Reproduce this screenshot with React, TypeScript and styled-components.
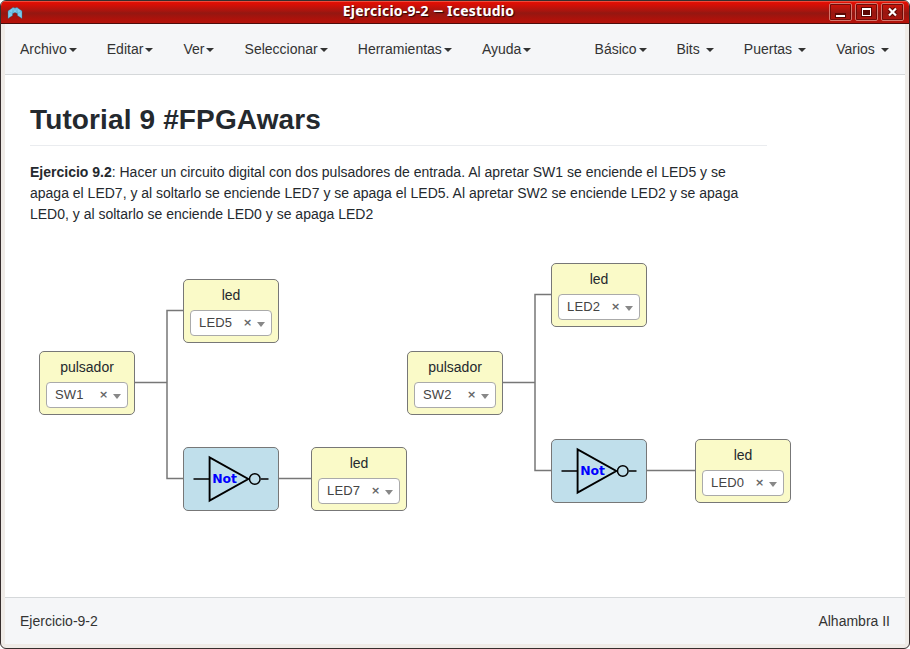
import React from "react";
import styled, { createGlobalStyle } from "styled-components";

const GlobalStyle = createGlobalStyle`
  * { box-sizing: border-box; }
  html, body { margin: 0; padding: 0; overflow: hidden; background: #fff; }
  body { font: 14px/20px "Liberation Sans", Arial, sans-serif; color: #24292e; }
`;

const Window = styled.div`
  width: 910px;
  height: 649px;
  display: flex;
  flex-direction: column;
  overflow: hidden;
  border: 1px solid #362d2d;
  border-radius: 6px;
  background: #efebe7;
`;

const TitleBar = styled.header`
  height: 23px;
  flex: none;
  display: grid;
  grid-template-columns: 32px 1fr 85px;
  align-items: center;
  border-bottom: 1px solid #4b0d0c;
  box-shadow: inset 0 1px 0 #ee4a3a;
  background: linear-gradient(#e51205 0%, #dd0e04 12%, #a6150f 46%, #941711 55%, #ae120b 82%, #b5120a 100%);
`;

const AppIcon = styled.svg`
  width: 16px;
  height: 14px;
  margin: 2px 0 0 6px;
`;

const Title = styled.h1`
  margin: -2px 0 0;
  font: bold 14px/20px "Noto Sans", sans-serif;
  letter-spacing: 0.25px;
  text-align: center;
  white-space: nowrap;
  color: #fff;
  text-shadow: 1px 1px 1px #2b0505;
`;

const Dash = styled.span`
  display: inline-block;
  transform: scaleX(1.25);
  margin: 0 1px;
`;

const WindowButtons = styled.div`
  display: flex;
  justify-content: flex-end;
  gap: 3px;
  padding: 0 5px 0 0;
`;

const WindowButton = styled.button`
  width: 23px;
  height: 18px;
  padding: 0;
  border: 1px solid #d4786f;
  border-radius: 2px;
  outline: 1px solid #6e0d09;
  outline-offset: -2px;
  background: linear-gradient(#d21309, #961711 55%, #ae140d);
  display: grid;
  place-items: center;
`;

const Bar = styled.nav`
  height: 51px;
  flex: none;
  margin: 0 4px;
  padding: 0 15px;
  display: flex;
  align-items: center;
  justify-content: space-between;
  background: #f5f6f8;
  border-bottom: 1px solid #d5d8da;
  color: #333;
`;

const MenuGroup = styled.div<{ $end?: boolean }>`
  display: flex;
  gap: ${(p) => (p.$end ? 29.8 : 30.1)}px;
  padding-right: ${(p) => (p.$end ? 0.9 : 0)}px;
`;

const MenuItem = styled.a<{ $spaced?: boolean }>`
  display: flex;
  align-items: center;
  gap: ${(p) => (p.$spaced ? 6.3 : 2)}px;
  line-height: 20px;
  &::after {
    content: "";
    border: 4px solid transparent;
    border-top-color: #333;
    border-bottom: 0;
    margin-top: 2px;
  }
`;

const Workspace = styled.main`
  flex: 1;
  min-height: 0;
  margin: 0 4px;
  padding: 26px 25px 0;
  position: relative;
  background: #fff;
`;

const Note = styled.section`
  width: 737px;
`;

const Heading = styled.h2`
  margin: 0 0 16px;
  height: 45px;
  font-size: 28px;
  letter-spacing: 0.13px;
  line-height: 37px;
  border-bottom: 1px solid #eaecef;
`;

const Paragraph = styled.p`
  margin: 0;
  line-height: 21px;
`;

const Wires = styled.svg`
  position: absolute;
  inset: 0;
  width: 900px;
  height: 522px;
`;

const Node = styled.div<{ $x: number; $y: number; $gate?: boolean }>`
  position: absolute;
  left: ${(p) => p.$x}px;
  top: ${(p) => p.$y}px;
  width: 96px;
  height: 64px;
  padding: 5px 6px;
  border: 1px solid #777;
  border-radius: 5px;
  background: ${(p) => (p.$gate ? "#c0dfeb" : "#fafac8")};
  text-align: center;
`;

const NodeLabel = styled.div`
  height: 25px;
  line-height: 21px;
`;

const Select = styled.div`
  height: 26px;
  display: flex;
  align-items: center;
  border: 1px solid #aaa;
  border-radius: 4px;
  background: #fff;
  padding: 0 6px 0 8px;
  font-size: 13px;
  color: #444;
`;

const Value = styled.span`
  flex: 1;
  text-align: left;
  letter-spacing: 0.15px;
`;

const Clear = styled.span`
  width: 9px;
  margin-right: 5px;
  font: bold 11px/20px "DejaVu Sans", sans-serif;
  color: #666;
`;

const Arrow = styled.i`
  border: 4px solid transparent;
  border-top: 5px solid #888;
  border-bottom: 0;
  margin-top: 2px;
`;

const GateDrawing = styled.svg`
  display: block;
  width: 94px;
  height: 62px;
  margin: -5px -6px;
`;

const Footer = styled.footer`
  height: 47px;
  flex: none;
  margin: 0 4px 4px;
  padding: 0 15px;
  display: flex;
  align-items: center;
  justify-content: space-between;
  border-top: 1px solid #d5d8da;
  background: #f5f6f8;
  color: #333;
`;

const leftMenus = ["Archivo", "Editar", "Ver", "Seleccionar", "Herramientas", "Ayuda"];
const rightMenus = [
  { label: "Básico", spaced: false },
  { label: "Bits", spaced: true },
  { label: "Puertas", spaced: true },
  { label: "Varios", spaced: true },
];

const ports = [
  { label: "pulsador", pin: "SW1", x: 34, y: 276 },
  { label: "led", pin: "LED5", x: 178, y: 204 },
  { label: "led", pin: "LED7", x: 306, y: 372 },
  { label: "pulsador", pin: "SW2", x: 402, y: 276 },
  { label: "led", pin: "LED2", x: 546, y: 188 },
  { label: "led", pin: "LED0", x: 690, y: 364 },
];

const gates = [
  { x: 178, y: 372 },
  { x: 546, y: 364 },
];

function Port({ label, pin, x, y }: (typeof ports)[number]) {
  return (
    <Node $x={x} $y={y}>
      <NodeLabel>{label}</NodeLabel>
      <Select>
        <Value>{pin}</Value>
        <Clear>×</Clear>
        <Arrow />
      </Select>
    </Node>
  );
}

function NotGate({ x, y }: { x: number; y: number }) {
  return (
    <Node $x={x} $y={y} $gate>
      <GateDrawing viewBox="0 0 94 62" fill="none" stroke="#000">
        <path d="M9.5 31H26M77 31H84.500" strokeWidth="1.300" />
        <path d="M25.600 9.300V52.700L64.300 31Z" strokeWidth="1.900" />
        <circle cx="70.800" cy="31" r="5.300" strokeWidth="1.500" />
        <text x="28.200" y="35" fill="#00f" stroke="none" fontFamily="DejaVu Sans" fontWeight="bold" fontSize="12.400">
          Not
        </text>
      </GateDrawing>
    </Node>
  );
}

export default function App() {
  return (
    <>
      <GlobalStyle />
      <Window>
        <TitleBar>
          <AppIcon viewBox="0 0 16 14">
            <path d="M1 5 6 1.500 8 2 10 1.500 15 5V12.500L10.500 9.500V7.500L8 6.500 5.500 7.500V9.500L1 12.500Z" fill="#7accee" stroke="#2b6e91" strokeWidth=".4" />
            <path d="M1 5 5.500 7.500 6 1.500M5.500 7.500 8 2 10.500 7.500 10 1.500M10.500 7.500 15 5" fill="none" stroke="#4a9cc0" strokeWidth=".4" />
          </AppIcon>
          <Title>Ejercicio-9-2 <Dash>−</Dash> Icestudio</Title>
          <WindowButtons>
            <WindowButton aria-label="Minimizar">
              <svg width="15" height="14"><path d="M2 8h11v5H2z" fill="#5b0804" /><path d="M3 10h9v2H3z" fill="#fff" /></svg>
            </WindowButton>
            <WindowButton aria-label="Maximizar">
              <svg width="15" height="14"><path d="M2 2h11v10H2z" fill="#5b0804" /><path fillRule="evenodd" d="M3 3h9v8H3zM4 5v5h7V5z" fill="#fff" /></svg>
            </WindowButton>
            <WindowButton aria-label="Cerrar">
              <svg width="15" height="14"><path d="m4 3.500 7 7m0-7-7 7" stroke="#5b0804" strokeWidth="4.500" /><path d="m4 3.500 7 7m0-7-7 7" stroke="#fff" strokeWidth="2.200" /></svg>
            </WindowButton>
          </WindowButtons>
        </TitleBar>
        <Bar>
          <MenuGroup>
            {leftMenus.map((label) => <MenuItem key={label}>{label}</MenuItem>)}
          </MenuGroup>
          <MenuGroup $end>
            {rightMenus.map((m) => <MenuItem key={m.label} $spaced={m.spaced}>{m.label}</MenuItem>)}
          </MenuGroup>
        </Bar>
        <Workspace>
          <Note>
            <Heading>Tutorial 9 #FPGAwars</Heading>
            <Paragraph>
              <b>Ejercicio 9.2</b>: Hacer un circuito digital con dos pulsadores de entrada. Al apretar SW1 se enciende el LED5 y se apaga el LED7, y al soltarlo se enciende LED7 y se apaga el LED5. Al apretar SW2 se enciende LED2 y se apaga LED0, y al soltarlo se enciende LED0 y se apaga LED2
            </Paragraph>
          </Note>
          <Wires fill="none" stroke="#777" strokeWidth="1.500">
            <path d="M130 307.500H162M178 235.500H162V403.500H178M274 403.500H306" />
            <path d="M498 307.500H530M546 219.500H530V395.500H546M642 395.500H690" />
          </Wires>
          {ports.map((p) => <Port key={p.pin} {...p} />)}
          {gates.map((g) => <NotGate key={g.x} {...g} />)}
        </Workspace>
        <Footer>
          <span>Ejercicio-9-2</span>
          <span>Alhambra II</span>
        </Footer>
      </Window>
    </>
  );
}
